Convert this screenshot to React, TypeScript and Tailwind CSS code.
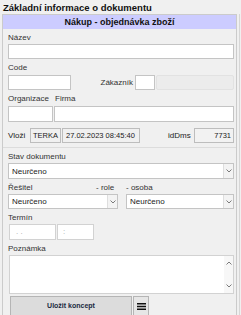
import React from "react";

const Chevron: React.FC<{ up?: boolean }> = ({ up }) => (
    <svg width="6" height="4" viewBox="0 0 6 4" className="block">
        <path d={up ? "M0.5 3.5 L3 1 L5.5 3.5" : "M0.5 0.5 L3 3 L5.5 0.5"} fill="none" stroke="#7a7a7a" strokeWidth="1" />
    </svg>
);

const Label: React.FC<{ text: string; className?: string }> = ({ text, className = "" }) => (
    <div className={`h-[15px] leading-[17px] text-[8px] text-[#333] ${className}`}>{text}</div>
);

const Select: React.FC<{ className?: string }> = ({ className = "" }) => (
    <div className={`flex border border-[#c4c4c4] bg-white ${className}`}>
        <span className="flex-1 pl-[3px] text-[8px] text-[#222] leading-[13px] self-center">Neurčeno</span>
        <div className="w-[10px] flex items-center justify-center border-l border-[#dedede] bg-[#f3f3f3]">
            <Chevron />
        </div>
    </div>
);

export default function App() {
    return (
        <div className="w-[241px] h-[315px] overflow-hidden bg-[#f0f0f0] font-['Liberation_Sans',Arial,sans-serif] flex flex-col">
            <div className="h-[14px] pl-[3px] text-[9.5px] font-bold leading-[15px] text-[#111]">
                Základní informace o dokumentu
            </div>
            <div className="flex flex-1">
                <div className="ml-[2px] w-[235px] border-x border-t border-[#cbcbcb] flex flex-col">
                    <div className="h-[14px] bg-[#ccccff] text-center text-[9px] font-bold leading-[14px] text-[#111]">
                        Nákup - objednávka zboží
                    </div>
                    <div className="pl-[5px] pr-[2px] flex flex-col">
                        <Label text="Název" />
                        <div className="h-[15px] border border-[#c4c4c4] bg-white" />

                        <Label text="Code" className="h-[16px] leading-[18px]" />
                        <div className="flex h-[15px] items-center">
                            <div className="w-[63px] h-full border border-[#c4c4c4] bg-white" />
                            <span className="ml-auto mr-[2px] text-[8px] text-[#333]">Zákazník</span>
                            <div className="w-[20px] h-full border border-[#c4c4c4] bg-white" />
                            <div className="ml-[1px] w-[78px] h-full border border-[#e2e2e2] bg-[#ececec] rounded-[2px]" />
                        </div>

                        <div className="flex h-[16px] leading-[18px] text-[8px] text-[#333]">
                            <span className="w-[47px]">Organizace</span>
                            <span>Firma</span>
                        </div>
                        <div className="flex h-[16px] gap-[1px]">
                            <div className="w-[45px] border border-[#c4c4c4] bg-white" />
                            <div className="flex-1 border border-[#c4c4c4] bg-white" />
                        </div>

                        <div className="flex h-[15px] mt-[6px] items-stretch text-[7.5px] text-[#222] whitespace-nowrap">
                            <span className="w-[22px] self-center text-[8px]">Vloži</span>
                            <div className="w-[31px] border border-[#bdbdbd] flex items-center justify-center">TERKA</div>
                            <div className="ml-[1px] w-[78px] border border-[#bdbdbd] flex items-center pl-[3px]">
                                27.02.2023 08:45:40
                            </div>
                            <span className="ml-[28px] w-[26px] self-center text-[8px]">idDms</span>
                            <div className="flex-1 border border-[#bdbdbd] bg-[#f2f2f2] flex items-center justify-end pr-[2px]">
                                7731
                            </div>
                        </div>
                    </div>

                    <div className="mt-[4px] h-px bg-[#dcdcdc]" />

                    <div className="pl-[5px] pr-[2px] flex flex-col">
                        <Label text="Stav dokumentu" className="h-[14px] leading-[16px]" />
                        <Select className="h-[16px]" />

                        <div className="flex h-[15px] leading-[17px] text-[8px] text-[#333]">
                            <span className="w-[88px]">Řešitel</span>
                            <span className="w-[30px]">- role</span>
                            <span>- osoba</span>
                        </div>
                        <div className="flex h-[15px]">
                            <Select className="w-[110px]" />
                            <Select className="ml-[8px] flex-1" />
                        </div>

                        <Label text="Termín" />
                        <div className="flex h-[16px] pl-[1px]">
                            <div className="w-[47px] border border-[#d2d2d2] bg-white text-[8px] text-[#aaa] leading-[13px] pl-[6px]">. .</div>
                            <div className="ml-[1px] w-[37px] border border-[#d2d2d2] bg-white text-[8px] text-[#aaa] leading-[13px] pl-[5px]">:</div>
                        </div>

                        <Label text="Poznámka" className="h-[13px] leading-[15px]" />
                        <div className="ml-[1px] h-[39px] border border-[#d2d2d2] bg-white flex justify-end">
                            <div className="w-[9px] flex flex-col items-center justify-between py-[5px] bg-[#f7f7f7]">
                                <Chevron up />
                                <Chevron />
                            </div>
                        </div>

                        <div className="flex h-[20px] mt-[2px] ml-[2px]">
                            <button className="w-[122px] border border-[#b5b5b5] bg-[#dcdcdc] text-[7px] font-bold text-[#1a2a40]">
                                Uložit koncept
                            </button>
                            <button className="ml-[1px] w-[16px] border border-[#b5b5b5] bg-[#e6e6e6] flex items-center justify-center">
                                <svg width="9" height="7" viewBox="0 0 9 7">
                                    <rect x="0" y="0" width="9" height="1.5" fill="#111" />
                                    <rect x="0" y="2.75" width="9" height="1.5" fill="#111" />
                                    <rect x="0" y="5.5" width="9" height="1.5" fill="#111" />
                                </svg>
                            </button>
                        </div>
                    </div>
                </div>
                <div className="ml-[2px] w-px bg-[#d6d6d6]" />
            </div>
        </div>
    );
}
